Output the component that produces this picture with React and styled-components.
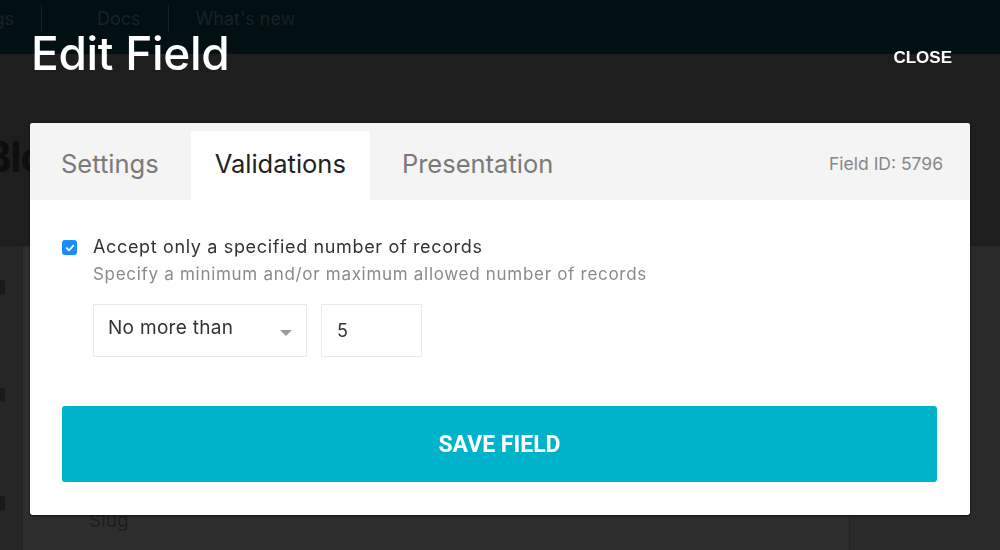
import React from 'react'
import styled, { createGlobalStyle } from 'styled-components';

const GlobalStyle = createGlobalStyle`
  html, body {
    margin: 0;
    padding: 0;
    background: #1e1e1e;
    font-family: Inter, "Noto Sans", sans-serif;
    overflow: hidden;
  }
  * { box-sizing: border-box; }
`;

const tabs = ['Settings', 'Validations', 'Presentation'];

const App = () => {
  const active = 'Validations';

  return (
    <>
      <GlobalStyle />
      <Page>
        <TopNav>
          <NavList>
            <NavItem divided>Settings</NavItem>
            <NavItem divided gapBefore>Docs</NavItem>
            <NavItem>What's new</NavItem>
          </NavList>
        </TopNav>
        <PageTitle>Blog Post</PageTitle>
        <Content>
          <Sidebar>
            <SideMark />
            <SideMark />
            <SideMark />
          </Sidebar>
          <Card>
            <CardLabel>Slug</CardLabel>
          </Card>
          <Aside />
        </Content>
      </Page>

      <Overlay>
        <OverlayHeader>
          <Title>Edit Field</Title>
          <CloseButton>CLOSE</CloseButton>
        </OverlayHeader>

        <Modal>
          <TabBar>
            <TabList>
              {tabs.map((t) => (
                <Tab key={t} active={t === active}>{t}</Tab>
              ))}
            </TabList>
            <FieldId>Field ID: 5796</FieldId>
          </TabBar>

          <ModalBody>
            <CheckRow>
              <CheckBox>
                <svg width="10" height="10" viewBox="0 0 10 10">
                  <path d="M1.8 5.2 L4 7.3 L8.3 2.6" fill="none" stroke="#fff" strokeWidth="1.8" strokeLinecap="round" strokeLinejoin="round" />
                </svg>
              </CheckBox>
              <div>
                <CheckLabel>Accept only a specified number of records</CheckLabel>
                <Hint>Specify a minimum and/or maximum allowed number of records</Hint>
              </div>
            </CheckRow>

            <Controls>
              <Select>
                <span>No more than</span>
                <Caret />
              </Select>
              <NumberBox>5</NumberBox>
            </Controls>

            <SaveButton>SAVE FIELD</SaveButton>
          </ModalBody>
        </Modal>
      </Overlay>
    </>
  )
}

const Page = styled.div`
  width: 1000px;
  height: 550px;
  display: flex;
  flex-direction: column;
  background: #1e1e1e;
`;

const TopNav = styled.nav`
  height: 54px;
  flex: none;
  background: #020f13;
  display: flex;
  align-items: flex-start;
  padding-top: 5px;
  overflow: hidden;
`;

const NavList = styled.div`
  display: flex;
  align-items: center;
  margin-left: -82px;
`;

const NavItem = styled.span`
  font-size: 18px;
  color: #182226;
  padding: 3px 27px;
  margin-left: ${(p) => (p.gapBefore ? '28px' : '0')};
  border-right: ${(p) => (p.divided ? '1px solid #182226' : 'none')};
`;

const PageTitle = styled.h1`
  margin: 80px 0 0 -16px;
  font-size: 42px;
  line-height: 1.1;
  font-weight: 700;
  color: #0e0e0e;
  height: 112px;
  letter-spacing: -1.5px;
`;

const Content = styled.div`
  flex: 1;
  display: flex;
`;

const Sidebar = styled.div`
  width: 22px;
  background: #262626;
  display: flex;
  flex-direction: column;
  padding-top: 34px;
  gap: 94px;
`;

const SideMark = styled.div`
  width: 5px;
  height: 14px;
  background: #1a1a1a;
`;

const Card = styled.div`
  width: 828px;
  background: #2d2d2d;
  border-left: 1px solid #232323;
  border-right: 1px solid #232323;
  display: flex;
  align-items: flex-end;
  padding: 0 0 18px 66px;
`;

const CardLabel = styled.span`
  font-size: 19px;
  color: #1d1d1d;
`;

const Aside = styled.div`
  flex: 1;
  background: #2a2a2a;
`;

const Overlay = styled.div`
  position: fixed;
  inset: 0;
  padding: 0 30px;
  display: flex;
  flex-direction: column;
`;

const OverlayHeader = styled.header`
  height: 123px;
  display: flex;
  justify-content: space-between;
  align-items: flex-start;
  padding: 30px 18px 0 1px;
`;

const Title = styled.h2`
  margin: 0;
  font-size: 46px;
  line-height: 1;
  font-weight: 500;
  color: #fff;
  letter-spacing: -0.3px;
`;

const CloseButton = styled.button`
  margin-top: 19px;
  border: none;
  background: none;
  padding: 0;
  font-family: "Liberation Sans", Arial, sans-serif;
  font-weight: 700;
  font-size: 17px;
  line-height: 1;
  color: #fff;
  cursor: pointer;
`;

const Modal = styled.section`
  width: 940px;
  height: 392px;
  background: #fff;
  border-radius: 3px;
  overflow: hidden;
  box-shadow: 0 1px 2px rgba(0, 0, 0, 0.6);
`;

const TabBar = styled.div`
  height: 77px;
  background: #f4f4f4;
  display: flex;
  align-items: flex-end;
  justify-content: space-between;
  padding: 0 27px 0 7px;
`;

const TabList = styled.div`
  display: flex;
  gap: 8px;
`;

const Tab = styled.div`
  height: 69px;
  padding: 0 24px 4px;
  display: flex;
  align-items: center;
  font-size: 25.5px;
  color: ${(p) => (p.active ? '#222' : '#7a7a7a')};
  background: ${(p) => (p.active ? '#fff' : 'transparent')};
  border-radius: 3px 3px 0 0;
`;

const FieldId = styled.div`
  align-self: center;
  font-size: 17.5px;
  color: #888;
  padding-top: 4px;
`;

const ModalBody = styled.div`
  padding: 40px 33px 33px 32px;
  display: flex;
  flex-direction: column;
`;

const CheckRow = styled.div`
  display: flex;
  align-items: flex-start;
  gap: 16px;
`;

const CheckBox = styled.span`
  width: 15px;
  height: 15px;
  border-radius: 3px;
  background: #1a8dfb;
  display: flex;
  align-items: center;
  justify-content: center;
  flex: none;
`;

const CheckLabel = styled.div`
  font-size: 18px;
  line-height: 1;
  color: #333;
  margin-top: -2px;
  letter-spacing: 0.65px;
`;

const Hint = styled.div`
  font-size: 17px;
  color: #8a8a8a;
  margin-top: 10px;
  line-height: 1;
  letter-spacing: 0.7px;
`;

const Controls = styled.div`
  display: flex;
  gap: 14px;
  margin: 21px 0 0 31px;
`;

const Select = styled.div`
  width: 214px;
  height: 53px;
  border: 1px solid #ebebeb;
  display: flex;
  align-items: center;
  justify-content: space-between;
  padding: 0 14px 0 14px;
  font-size: 19px;
  letter-spacing: 0.3px;
  color: #333;
  span { margin-top: -6px; }
`;

const Caret = styled.span`
  width: 0;
  height: 0;
  border-left: 6px solid transparent;
  border-right: 6px solid transparent;
  border-top: 6px solid #9a9a9a;
  margin-top: 4px !important;
`;

const NumberBox = styled.div`
  width: 101px;
  height: 53px;
  border: 1px solid #ebebeb;
  display: flex;
  align-items: center;
  padding: 0 15px;
  font-size: 18px;
  color: #333;
`;

const SaveButton = styled.button`
  margin-top: 49px;
  height: 76px;
  width: 100%;
  border: none;
  border-radius: 3px;
  background: #00b3ca;
  color: #fff;
  font-family: Roboto, "Liberation Sans", sans-serif;
  font-weight: 700;
  font-size: 23px;
  cursor: pointer;
`;

export default App;
